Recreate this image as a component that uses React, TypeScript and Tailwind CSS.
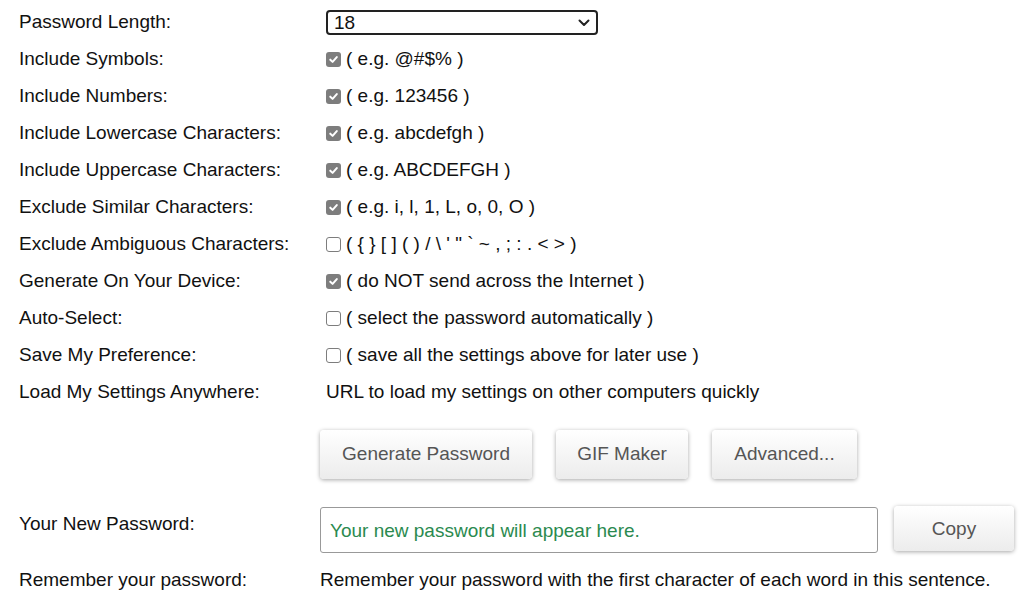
import React from "react";

const font = { fontFamily: '"Liberation Sans", Arial, sans-serif' };

function Box({ checked }: { checked: boolean }) {
  if (checked) {
    return (
      <span className="w-[15px] h-[15px] rounded-[3px] bg-[#7d7d7d] grid place-items-center shrink-0">
        <svg width="11" height="11" viewBox="0 0 12 12" fill="none" stroke="white" strokeWidth="2.2" strokeLinecap="round" strokeLinejoin="round">
          <path d="M2.5 6.2 5 8.6 9.6 3.4" />
        </svg>
      </span>
    );
  }
  return <span className="w-[15px] h-[15px] rounded-[3px] border border-[#7d7d7d] bg-white shrink-0" />;
}

const options: [string, boolean, string][] = [
  ["Include Symbols:", true, "( e.g. @#$% )"],
  ["Include Numbers:", true, "( e.g. 123456 )"],
  ["Include Lowercase Characters:", true, "( e.g. abcdefgh )"],
  ["Include Uppercase Characters:", true, "( e.g. ABCDEFGH )"],
  ["Exclude Similar Characters:", true, "( e.g. i, l, 1, L, o, 0, O )"],
  ["Exclude Ambiguous Characters:", false, "( { } [ ] ( ) / \\ ' \" ` ~ , ; : . < > )"],
  ["Generate On Your Device:", true, "( do NOT send across the Internet )"],
  ["Auto-Select:", false, "( select the password automatically )"],
  ["Save My Preference:", false, "( save all the settings above for later use )"],
];

function Btn({ children, w }: { children: React.ReactNode; w: string }) {
  return (
    <button
      className={`${w} h-[49px] rounded-[4px] bg-gradient-to-b from-white to-[#ececec] text-[#555] text-[19px] shadow-[0_1px_4px_rgba(0,0,0,0.35)]`}
    >
      {children}
    </button>
  );
}

export default function App() {
  return (
    <div className="bg-white w-[1024px] h-[611px] overflow-hidden text-[19px] text-[#111] pl-[19px] pt-[4px]" style={font}>
      {/* Settings */}
      <div className="grid grid-cols-[301px_1fr]">
        <div className="h-[37px] flex items-center">Password Length:</div>
        <div className="h-[37px] flex items-center pl-[6px]">
          <div className="w-[272px] h-[25px] border-2 border-[#222] rounded-[4px] flex items-center justify-between pl-[6px] pr-[6px] text-[19px] leading-none">
            <span>18</span>
            <svg width="12" height="8" viewBox="0 0 12 8" fill="none" stroke="#222" strokeWidth="2" strokeLinecap="round" strokeLinejoin="round">
              <path d="M1.5 1.5 6 6 10.5 1.5" />
            </svg>
          </div>
        </div>

        {options.map(([label, checked, hint]) => (
          <React.Fragment key={label}>
            <div className="h-[37px] flex items-center">{label}</div>
            <div className="h-[37px] flex items-center pl-[6px] gap-[5px]">
              <Box checked={checked} />
              <span className="whitespace-pre">{hint}</span>
            </div>
          </React.Fragment>
        ))}

        <div className="h-[37px] flex items-center">Load My Settings Anywhere:</div>
        <div className="h-[37px] flex items-center pl-[6px]">URL to load my settings on other computers quickly</div>
      </div>

      {/* Actions */}
      <div className="flex gap-[24px] pl-[301px] mt-[19px]">
        <Btn w="w-[212px]">Generate Password</Btn>
        <Btn w="w-[132px]">GIF Maker</Btn>
        <Btn w="w-[145px]">Advanced...</Btn>
      </div>

      {/* Result */}
      <div className="grid grid-cols-[301px_1fr] mt-[28px]">
        <div className="h-[46px] flex items-start pt-[3px]">Your New Password:</div>
        <div className="flex items-start gap-[16px]">
          <div className="w-[558px] h-[46px] border border-[#999] rounded-[3px] flex items-center pl-[9px] pt-[2px] text-[#2b8a4f]">
            Your new password will appear here.
          </div>
          <Btn w="w-[120px] !h-[45px] -mt-[1px] pt-[2px]">Copy</Btn>
        </div>
        <div className="h-[28px] flex items-center mt-[13px]">Remember your password:</div>
        <div className="h-[28px] flex items-center mt-[13px]">
          Remember your password with the first character of each word in this sentence.
        </div>
      </div>
    </div>
  );
}
